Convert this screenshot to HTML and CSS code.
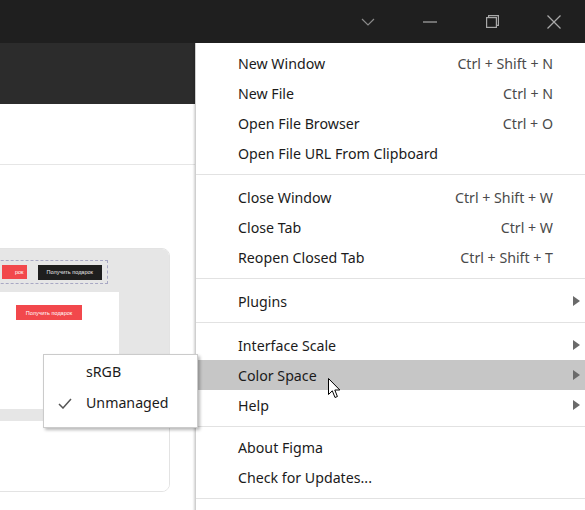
FILE: index.html
```html
<!DOCTYPE html>
<html>
<head>
<meta charset="utf-8">
<link rel="stylesheet" href="styles.css">
</head>
<body>
<div class="app">
  <div class="titlebar">
    <div class="tb-btn">
      <svg width="14" height="8" viewBox="0 0 14 8"><polyline points="1,1 7,7 13,1" fill="none" stroke="#8a8a8a" stroke-width="1.2"/></svg>
    </div>
    <div class="tb-btn">
      <svg width="14" height="2" viewBox="0 0 14 2"><line x1="0" y1="1" x2="14" y2="1" stroke="#a8a8a8" stroke-width="1.2"/></svg>
    </div>
    <div class="tb-btn">
      <svg width="13" height="13" viewBox="0 0 13 13"><rect x="0.6" y="2.6" width="9.8" height="9.8" fill="none" stroke="#a8a8a8" stroke-width="1.2"/><polyline points="2.6,2.6 2.6,0.6 12.4,0.6 12.4,10.4 10.4,10.4" fill="none" stroke="#a8a8a8" stroke-width="1.2"/></svg>
    </div>
    <div class="tb-btn">
      <svg width="14" height="14" viewBox="0 0 14 14"><line x1="0.5" y1="0.5" x2="13.5" y2="13.5" stroke="#a8a8a8" stroke-width="1.2"/><line x1="13.5" y1="0.5" x2="0.5" y2="13.5" stroke="#a8a8a8" stroke-width="1.2"/></svg>
    </div>
  </div>

  <div class="main">
    <div class="left">
      <div class="toolbar"></div>
      <div class="subheader"></div>
      <div class="canvas">
        <div class="card">
          <div class="thumb">
            <div class="dash-row">
              <div class="btn red small">рок</div>
              <div class="btn black">Получить подарок</div>
            </div>
            <div class="frame">
              <div class="btn red">Получить подарок</div>
            </div>
          </div>
          <div class="card-info"></div>
        </div>
      </div>
    </div>

    <div class="menu">
      <div class="item"><span>New Window</span><span class="sc">Ctrl + Shift + N</span></div>
      <div class="item"><span>New File</span><span class="sc">Ctrl + N</span></div>
      <div class="item"><span>Open File Browser</span><span class="sc">Ctrl + O</span></div>
      <div class="item"><span>Open File URL From Clipboard</span></div>
      <div class="sep"></div>
      <div class="item"><span>Close Window</span><span class="sc">Ctrl + Shift + W</span></div>
      <div class="item"><span>Close Tab</span><span class="sc">Ctrl + W</span></div>
      <div class="item"><span>Reopen Closed Tab</span><span class="sc">Ctrl + Shift + T</span></div>
      <div class="sep"></div>
      <div class="item sub"><span>Plugins</span><span class="arrow"></span></div>
      <div class="sep"></div>
      <div class="item sub"><span>Interface Scale</span><span class="arrow"></span></div>
      <div class="item sub active"><span>Color Space</span><span class="arrow"></span></div>
      <div class="item sub"><span>Help</span><span class="arrow"></span></div>
      <div class="sep tight"></div>
      <div class="item"><span>About Figma</span></div>
      <div class="item"><span>Check for Updates...</span></div>
      <div class="sep"></div>
    </div>

    <div class="submenu">
      <div class="sitem"><span class="check"></span><span>sRGB</span></div>
      <div class="sitem"><span class="check"><svg width="14" height="11" viewBox="0 0 14 11"><polyline points="1,6 5,10 13,1" fill="none" stroke="#555" stroke-width="1.5"/></svg></span><span>Unmanaged</span></div>
    </div>

    <svg class="cursor" width="13" height="21" viewBox="0 0 13 21"><path d="M0.5 0.5 L0.5 16.5 L4.3 12.8 L7 19.5 L9.4 18.5 L6.8 12 L11.8 12 Z" fill="#fff" stroke="#000" stroke-width="1" stroke-linejoin="miter"/></svg>
  </div>
</div>
</body>
</html>
```

FILE: styles.css
```css
* { box-sizing: border-box; }
html, body { margin: 0; padding: 0; }
body {
  width: 585px;
  height: 510px;
  overflow: hidden;
  background: #ffffff;
  font-family: "Noto Sans", "Open Sans", sans-serif;
}
.app { width: 585px; height: 510px; display: flex; flex-direction: column; }
.titlebar {
  height: 43px;
  background: #1f1f1f;
  display: flex;
  justify-content: flex-end;
  flex: none;
}
.tb-btn {
  width: 62px;
  height: 43px;
  display: flex;
  align-items: center;
  justify-content: center;
}
.main { position: relative; flex: 1; overflow: hidden; }
.left { width: 195px; height: 100%; overflow: hidden; }
.toolbar { height: 61px; background: #2c2c2c; }
.subheader { height: 61px; border-bottom: 1px solid #e6e6e6; }
.canvas { padding-top: 83px; }
.card {
  margin-left: -80px;
  width: 250px;
  border: 1px solid #e3e3e3;
  border-radius: 8px;
  overflow: hidden;
}
.thumb {
  height: 172px;
  background: #e6e6e6;
  padding-top: 11px;
  display: flex;
  flex-direction: column;
}
.dash-row {
  margin-left: 40px;
  width: 147px;
  height: 24px;
  border: 1px dashed #a8a8c4;
  display: flex;
  align-items: center;
  gap: 11px;
  padding: 0 5px 0 40px;
}
.btn {
  font-family: "Liberation Sans", sans-serif;
  font-size: 5.5px;
  color: #fff;
  display: flex;
  align-items: center;
  justify-content: center;
  white-space: nowrap;
}
.btn.red { background: #f2484c; height: 15px; width: 66px; }
.btn.red.small { width: 25px; justify-content: flex-end; padding-right: 3px; height: 14px; }
.btn.black { background: #1e1e1e; height: 15px; width: 66px; color: #e8e8e8; }
.frame {
  margin-top: 8px;
  margin-left: 40px;
  width: 158px;
  height: 117px;
  background: #ffffff;
  padding: 13px 0 0 55px;
}
.card-info { height: 70px; background: #fff; }

.menu {
  position: absolute;
  left: 195px;
  top: 0;
  width: 395px;
  height: 470px;
  background: #ffffff;
  border-left: 1px solid #cfcfcf;
  box-shadow: -1px 0 2px rgba(0,0,0,0.18);
  padding-top: 5px;
  font-size: 14.2px;
  color: #1b1b1b;
}
.item {
  height: 30px;
  display: flex;
  align-items: center;
  justify-content: space-between;
  padding: 0 37px 0 42px;
}
.item.active { background: #c6c6c6; }
.sc { color: #4a4a4a; }
.arrow {
  width: 0; height: 0;
  border-top: 5px solid transparent;
  border-bottom: 5px solid transparent;
  border-left: 7px solid #6a6a6a;
  margin-right: -27px;
}
.sep { height: 1px; background: #e2e2e2; margin: 6px 0 7px; }
.sep.tight { margin: 6px 0 5px; }

.submenu {
  position: absolute;
  left: 43px;
  top: 311px;
  width: 155px;
  height: 74px;
  background: #ffffff;
  border: 1px solid #cbcbcb;
  box-shadow: 2px 2px 3px rgba(0,0,0,0.28);
  padding-top: 1px;
  font-size: 14.2px;
  color: #1b1b1b;
}
.sitem { height: 31px; display: flex; align-items: center; }
.check { width: 42px; display: flex; justify-content: flex-end; padding-right: 14px; padding-top: 2px; }
.cursor { position: absolute; left: 328px; top: 335px; }
```
